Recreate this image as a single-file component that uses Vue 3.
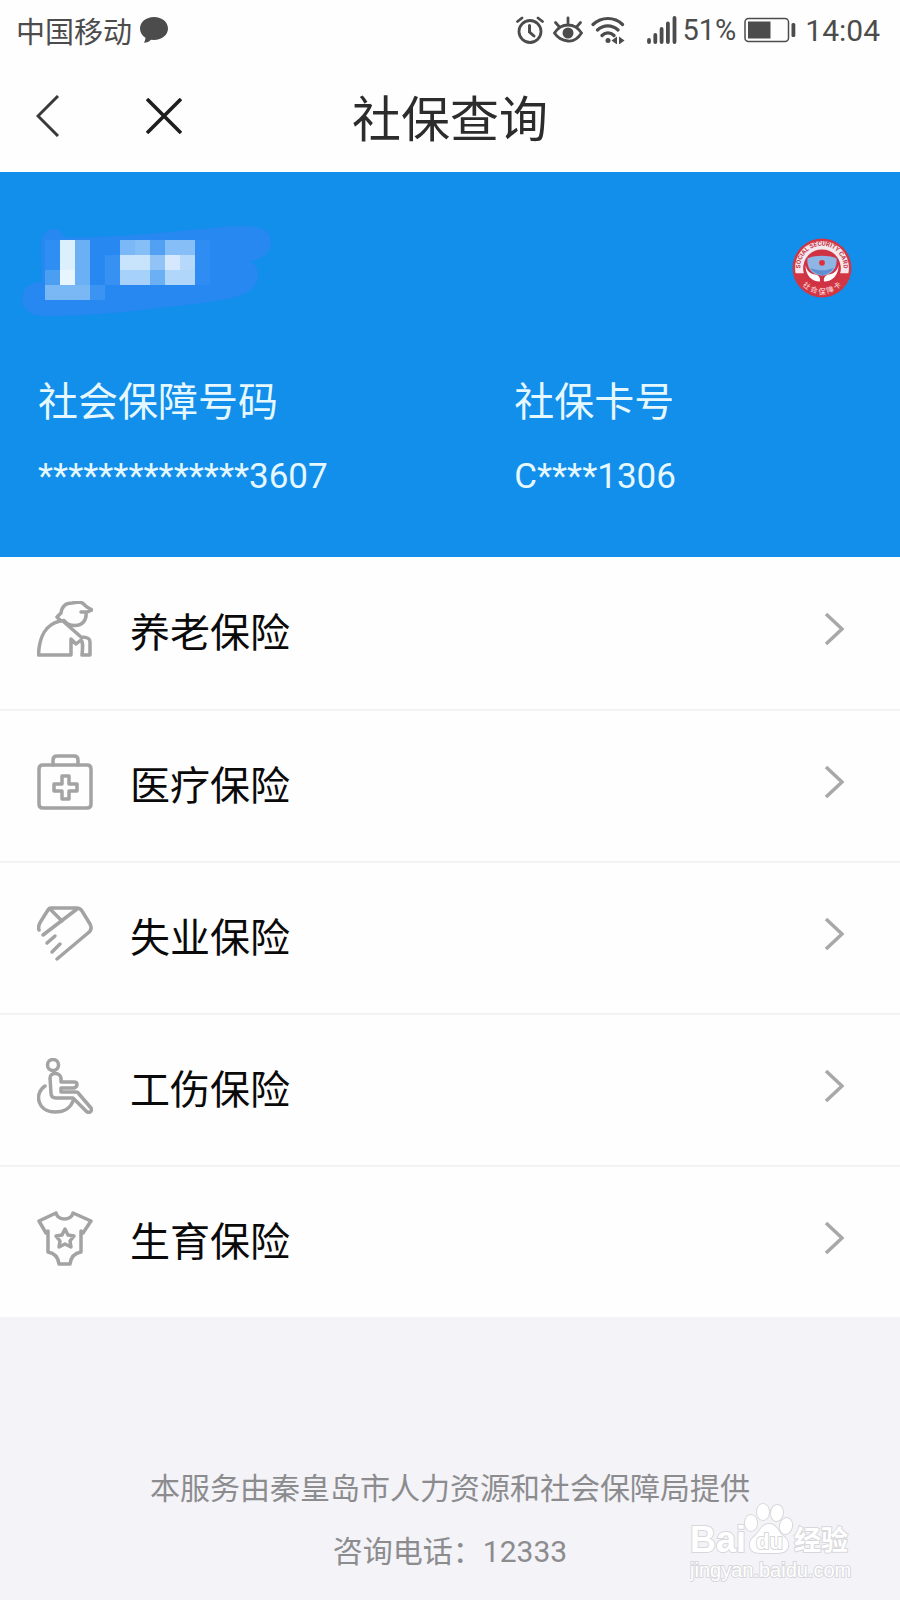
<template>
  <div class="page">
    <div class="status-bar">
      <div class="status-left">
        <span>中国移动</span>
        <svg class="bubble" width="30" height="28" viewBox="0 0 30 28">
          <path d="M15 1C7 1 1 6 1 12.500c0 4 2 7 5.500 9.200-.2 2-.8 3.600-1.600 5 3 0 5.500-1.200 7-3l3.100.2c8 0 14-5 14-11.400S23 1 15 1z" fill="#4c4c4c" />
        </svg>
      </div>
      <div class="status-right">
        <svg width="28" height="28" viewBox="0 0 28 28" fill="none" stroke="#4c4c4c" stroke-width="2.800" stroke-linecap="round">
          <circle cx="14" cy="15.500" r="11" />
          <path d="M1.500 5.500 6 2M26.500 5.500 22 2" />
          <path d="M13.500 9.500v6.500l4.500 4" stroke-width="3" />
        </svg>
        <svg class="eye" width="30" height="28" viewBox="0 0 30 28" fill="none" stroke="#4c4c4c" stroke-width="2.800" stroke-linecap="round">
          <path d="M1.500 17C5 11.500 9.500 9 15 9s10 2.500 13.500 8c-3.500 5.500-8 8.500-13.500 8S5 22.500 1.500 17z" />
          <path d="M15 2v5M2.500 6.500 6 10.500M27.500 6.500 24 10.500" />
          <circle cx="15" cy="17" r="5.500" fill="#4c4c4c" stroke="none" />
        </svg>
        <svg class="wifi" width="34" height="28" viewBox="0 0 34 28" fill="none" stroke="#4c4c4c" stroke-width="3.200" stroke-linecap="round">
          <path d="M2 8.500C10.500.5 23.500.5 31.500 8.500M6.500 14c6-5.500 14.500-5.500 20.500 0M11 19.500c3.500-3.500 8.500-3.500 12 0" />
          <circle cx="17" cy="24.500" r="2.500" fill="#4c4c4c" stroke="none" />
          <path d="m26 20.500-5.500 4 5.500 4zM28 20.500l5.500 4-5.500 4z" fill="#4c4c4c" stroke="none" />
        </svg>
        <svg class="signal" width="30" height="28" viewBox="0 0 30 28" stroke="#4c4c4c" stroke-width="3.800" stroke-linecap="round">
          <path d="M2 24v2M8.300 19v7M14.600 13v13M20.900 7.500V26M27.500 2v24" />
        </svg>
        <span>51%</span>
        <svg class="battery" width="52" height="26" viewBox="0 0 52 26">
          <rect x="1" y="1.500" width="43.500" height="23" rx="3.500" fill="none" stroke="#4c4c4c" stroke-width="1.500" />
          <rect x="4" y="4.500" width="22.500" height="17" fill="#4c4c4c" />
          <rect x="47.500" y="6" width="3.800" height="14" rx="1.500" fill="#4c4c4c" />
        </svg>
        <span class="clock">14:04</span>
      </div>
    </div>

    <header class="nav">
      <div class="nav-actions">
        <button class="icon-btn" type="button" aria-label="返回">
          <svg width="24" height="42" viewBox="0 0 24 42" fill="none" stroke="#3a3a3a" stroke-width="3">
            <path d="M22 1 2 21l20 20" />
          </svg>
        </button>
        <button class="icon-btn" type="button" aria-label="关闭">
          <svg width="36" height="36" viewBox="0 0 36 36" stroke="#1e1e1e" stroke-width="3.600">
            <path d="m1 1 34 34M35 1 1 35" />
          </svg>
        </button>
      </div>
      <h1>社保查询</h1>
    </header>

    <section class="card">
      <div class="card-top">
        <!-- 打码后的姓名 -->
        <svg class="masked-name" width="240" height="58" viewBox="38 238 240 58">
          <path d="M54 229c-8 0-13 6-13 16l1 37c-13 0-20 7-20 17 0 11 9 17 23 17 50 0 100-6 165-14 25-4 48-8 48-26 0-8-3-12-8-15 14-2 21-9 21-19 0-11-10-16-28-16-45 1-100 12-178 11-3-5-6-8-11-8z" fill="#2688f0" />
          <rect
            v-for="(c, i) in mosaic"
            :key="i"
            :x="c[0]"
            :y="c[1]"
            :width="c[2]"
            :height="c[3]"
            :fill="c[4]"
          />
        </svg>
        <svg width="60" height="60" viewBox="0 0 58 58">
          <defs>
            <path id="arc-top" d="M8.500 33a21 21 0 1 1 41 0" />
            <path id="arc-bottom" d="M4 35a26 26 0 0 0 50 0" />
          </defs>
          <circle cx="29" cy="29" r="28.500" fill="#d33643" />
          <path d="M3.500 34a26 26 0 1 1 51 0h-8a18 18 0 1 0-35 0z" fill="#f4e7ee" />
          <circle cx="29" cy="29" r="18" fill="#cf3242" />
          <path d="M15 19.500c9-3 19-3 28 0 1 8-3 16-14 17-11-1-15-9-14-17z" fill="#8fb5e4" />
          <path d="M18 29c7 3 15 3 22 0-2 4-6 6-11 7-5-1-9-3-11-7z" fill="#5e8fd0" />
          <circle cx="29" cy="24" r="2.800" fill="#df2f3c" />
          <path d="M13 26c1 5 4 8 8 9 4 0 7 3 6 7-8 0-14-6-14-16zM45 26c-1 5-4 8-8 9-4 0-7 3-6 7 8 0 14-6 14-16z" fill="#fff" />
          <text class="seal-en"><textPath href="#arc-top" startOffset="50%" text-anchor="middle">SOCIAL SECURITY CARD</textPath></text>
          <text class="seal-cn"><textPath href="#arc-bottom" startOffset="50%" text-anchor="middle">社 会 保 障 卡</textPath></text>
        </svg>
      </div>
      <dl class="numbers">
        <div v-for="n in numbers" :key="n.label">
          <dt>{{ n.label }}</dt>
          <dd>{{ n.value }}</dd>
        </div>
      </dl>
    </section>

    <nav class="list">
      <a v-for="item in items" :key="item.title" class="row" href="#">
        <svg class="row-icon" width="56" height="56" viewBox="0 0 56 56">
          <path v-for="d in item.paths" :key="d" :d="d" />
        </svg>
        <span class="row-title">{{ item.title }}</span>
        <svg class="arrow" width="20" height="32" viewBox="0 0 20 32">
          <path d="m2 1 16 15L2 31" />
        </svg>
      </a>
    </nav>

    <footer class="footer">
      <p>本服务由秦皇岛市人力资源和社会保障局提供</p>
      <p>咨询电话：12333</p>
      <svg class="watermark" width="164" height="80" viewBox="0 0 164 80">
        <g class="mark">
          <text x="0" y="50" class="mark-bai">Bai</text>
          <ellipse cx="61" cy="21" rx="6" ry="8" />
          <ellipse cx="73" cy="10" rx="6" ry="8" />
          <ellipse cx="87" cy="11" rx="6" ry="8" transform="rotate(8 87 11)" />
          <ellipse cx="96" cy="24" rx="6" ry="8" transform="rotate(12 96 24)" />
          <path d="M79 22c-7 0-9 7-13 11-5 4-7 7-6 12 2 7 9 6 19 6s17 1 19-6c1-5-1-8-6-12-4-4-6-11-13-11z" />
          <text x="66" y="47" class="mark-du">du</text>
          <text x="104" y="48" class="mark-cn">经验</text>
          <text x="0" y="75" class="mark-url">jingyan.baidu.com</text>
        </g>
      </svg>
    </footer>
  </div>
</template>

<script setup>
import { ref } from 'vue';

const numbers = ref([
  { label: '社会保障号码', value: '**************3607' },
  { label: '社保卡号', value: 'C****1306' }
]);

// x, y, 宽, 高, 颜色
const mosaic = [
  [45, 240, 15, 30, '#2f8ef3'],
  [60, 240, 15, 30, '#dceffd'],
  [75, 240, 15, 45, '#6bb0f5'],
  [45, 270, 15, 15, '#4b9ff3'],
  [60, 270, 15, 15, '#e6f5fe'],
  [45, 285, 45, 15, '#7ab8f5'],
  [90, 285, 15, 15, '#3b94f2'],
  [105, 255, 15, 30, '#3791f2'],
  [120, 240, 15, 15, '#7ab8f7'],
  [135, 240, 15, 15, '#86bef7'],
  [120, 255, 30, 15, '#c8e3fc'],
  [120, 270, 30, 15, '#a6d1fa'],
  [150, 240, 15, 15, '#52a0f4'],
  [150, 255, 15, 15, '#92c3f7'],
  [150, 270, 15, 15, '#6bb0f5'],
  [165, 240, 30, 15, '#86bef7'],
  [165, 255, 15, 15, '#d5e8fd'],
  [180, 255, 15, 15, '#b6d8fa'],
  [165, 270, 30, 15, '#b0d6fa'],
  [195, 240, 15, 45, '#2e8cf2']
];

const items = ref([
  {
    title: '养老保险',
    paths: [
      'M24 20 20 16l4-4c1-7 5-10 11-10l7-1c4 0 5 3 8 5l5 3-6 2.500c1 8-4 13-11 13-6 0-9-2-11-5z',
      'M49 11h-5',
      'M23 20C9 23 2 36 1.500 54H34V38l5 5 5-4c2 2 2 5 1 15h8V41c0-4-3-5-9-5L27 21'
    ]
  },
  {
    title: '医疗保险',
    paths: [
      'M6 11h44q4 0 4 4v35q0 4-4 4H6q-4 0-4-4V15q0-4 4-4z',
      'M16 11V6q0-4 4-4h17q4 0 4 4v5',
      'M25 22h7v8h8v7h-8v8h-7v-8h-8v-7h8z'
    ]
  },
  {
    title: '失业保险',
    paths: [
      'M2 24c-1-3 0-6 2-9L11 4q1-2 3-2h26q3 0 5 3l8 13c2 4 1 7-2 9L20 53',
      'M13 3l12 12M40 3 6 29',
      'M18 30l-8 7M23 38l-8 8'
    ]
  },
  {
    title: '工伤保险',
    paths: [
      'M16 1.500a5.500 5.500 0 1 1 0 11 5.500 5.500 0 1 1 0-11z',
      'M13 20c0-6 10-6 11 0v4h13q3 0 3 2.500T37 30H24v4h15q2 0 3 2l12 14c2 3-2 6-5 3L36 40H19q-5 0-5-5z',
      'M8 28C-3 35 0 54 18 54c10 0 16-5 18-11'
    ]
  },
  {
    title: '生育保险',
    paths: [
      'M19 3 2 11l7 12 2-2v21c6 1 10 4 11 12h11c1-8 5-11 11-12V21l2 2 8-12-18-8c-2 8-15 8-17 0z',
      'm28 19 3 6 6 1-4 5 1 6-6-3-6 3 1-6-4-5 6-1z'
    ]
  }
]);
</script>

<style>
body {
  margin: 0;
}
</style>

<style scoped>
.page {
  min-height: 100vh;
  display: flex;
  flex-direction: column;
  background-color: #fefefe;
  font-family: Roboto, 'Noto Sans CJK SC', sans-serif;
}

.status-bar {
  height: 60px;
  padding: 0 20px 0 16px;
  display: flex;
  align-items: center;
  justify-content: space-between;
  font-size: 29px;
  color: #4c4c4c;
}

.status-left,
.status-right {
  display: flex;
  align-items: center;
}

.bubble {
  margin-left: 7px;
}

.eye {
  margin-left: 9px;
}

.wifi {
  margin-left: 8px;
}

.signal {
  margin: 0 5px 0 22px;
}

.battery {
  margin: 0 9px 0 8px;
}

.clock {
  font-size: 30px;
}

.nav {
  height: 112px;
  padding: 0 36px;
  display: grid;
  grid-template-columns: 1fr auto 1fr;
  align-items: center;
}

.nav-actions {
  display: flex;
  align-items: center;
  gap: 86px;
}

.icon-btn {
  display: flex;
  padding: 0;
  border: none;
  background: none;
  cursor: pointer;
}

.nav h1 {
  margin: 0;
  padding-top: 10px;
  font-size: 49px;
  font-weight: 400;
  line-height: 72px;
  color: #2c2c2c;
}

.card {
  padding: 66px 48px 56px 38px;
  background-color: #128eeb;
  color: #e6f8ff;
}

.card-top {
  display: flex;
  justify-content: space-between;
}

.masked-name {
  overflow: visible;
}

.seal-en {
  font-size: 6px;
  font-weight: 700;
  fill: #c8323f;
}

.seal-cn {
  font-size: 7px;
  fill: #fbe3e6;
}

.numbers {
  margin: 77px 0 0;
  display: grid;
  grid-template-columns: 117fr 83fr;
}

.numbers dt {
  font-size: 40px;
  line-height: 56px;
}

.numbers dd {
  margin: 22px 0 0;
  font-size: 35px;
  line-height: 48px;
}

.row {
  height: 152px;
  padding: 0 56px 9px 37px;
  box-sizing: border-box;
  display: flex;
  align-items: center;
  color: #0a0a0a;
  text-decoration: none;
}

.row + .row {
  border-top: 2px solid #f3f3f4;
}

.row-icon {
  flex: none;
  fill: none;
  stroke: #a3a3a3;
  stroke-width: 3.5;
  stroke-linecap: round;
  stroke-linejoin: round;
}

.row-title {
  flex: 1;
  margin-left: 37px;
  padding-top: 2px;
  font-size: 40px;
}

.arrow {
  fill: none;
  stroke: #a8a8a8;
  stroke-width: 3.5;
}

.footer {
  position: relative;
  flex: 1;
  padding: 140px 20px 16px;
  background-color: #f3f3f8;
  text-align: center;
}

.footer p {
  margin: 0;
  font-size: 30px;
  line-height: 63px;
  color: #8c8c8f;
}

.watermark {
  position: absolute;
  right: 46px;
  bottom: 18px;
}

.mark {
  fill: #fff;
  stroke: #d8d8dc;
  stroke-width: 2;
  paint-order: stroke;
}

.mark-bai {
  font-family: 'Liberation Sans', sans-serif;
  font-size: 36px;
  font-weight: 700;
}

.mark-du {
  font-family: 'Liberation Sans', sans-serif;
  font-size: 22px;
  font-weight: 700;
}

.mark-cn {
  font-family: 'Noto Sans CJK SC', sans-serif;
  font-size: 27px;
  font-weight: 700;
}

.mark-url {
  font-family: 'Liberation Sans', sans-serif;
  font-size: 20px;
}
</style>
